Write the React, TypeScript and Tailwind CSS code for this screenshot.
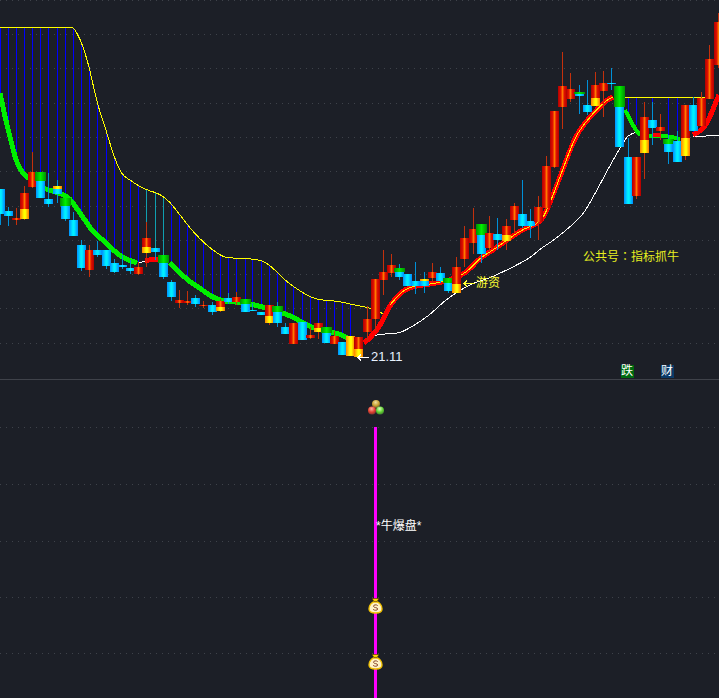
import React from "react";

type Kind = "r" | "y" | "c" | "g" | "o" | "t";
// x, wickTop, bodyTop, bodyBottom, wickBottom, kind, split
type C = [number, number, number, number, number, Kind, number?];

const candles: C[] = [
  [0, 189, 189, 214, 225, "c"],
  [8, 207, 211, 216, 226, "c"],
  [16, 208, 218, 220, 225, "r"],
  [24, 186, 193, 219, 220, "y", 209],
  [32, 152, 172, 187, 188, "r"],
  [40, 172, 172, 198, 198, "g", 181],
  [48, 173, 199, 204, 207, "c"],
  [57, 180, 186, 194, 203, "t", 189],
  [65, 198, 198, 219, 221, "g", 206],
  [73, 212, 220, 236, 236, "c"],
  [81, 240, 245, 268, 271, "c"],
  [89, 245, 250, 270, 277, "r"],
  [97, 241, 250, 255, 257, "c"],
  [106, 250, 250, 266, 269, "c"],
  [114, 259, 263, 272, 273, "c"],
  [122, 255, 265, 267, 269, "c"],
  [130, 260, 268, 271, 274, "c"],
  [138, 262, 267, 274, 275, "r"],
  [146, 222, 238, 253, 267, "y", 247],
  [155, 248, 248, 252, 260, "c"],
  [163, 255, 255, 277, 279, "g", 263],
  [171, 280, 282, 297, 301, "c"],
  [179, 290, 300, 303, 308, "r"],
  [187, 291, 301, 303, 305, "r"],
  [195, 295, 298, 304, 307, "c"],
  [203, 301, 305, 306, 308, "r"],
  [212, 302, 305, 312, 315, "c"],
  [220, 299, 301, 311, 312, "y", 307],
  [228, 293, 298, 302, 304, "c"],
  [236, 292, 297, 302, 305, "r"],
  [245, 299, 299, 312, 312, "g", 304],
  [252, 303, 310, 311, 311, "c"],
  [261, 312, 312, 315, 315, "c"],
  [269, 305, 305, 323, 325, "y", 316],
  [277, 302, 306, 323, 327, "g", 312],
  [285, 323, 327, 334, 334, "c"],
  [293, 323, 323, 344, 344, "r"],
  [302, 322, 322, 340, 340, "c"],
  [310, 327, 335, 338, 339, "r"],
  [318, 323, 323, 332, 339, "y", 328],
  [326, 327, 327, 343, 343, "g", 333],
  [334, 331, 336, 344, 344, "r"],
  [342, 342, 342, 355, 355, "c"],
  [350, 336, 336, 356, 356, "o"],
  [358, 337, 337, 357, 357, "y", 349],
  [367, 306, 319, 332, 341, "r"],
  [375, 279, 279, 319, 331, "r"],
  [383, 250, 272, 280, 295, "r"],
  [391, 254, 265, 273, 277, "r"],
  [399, 264, 268, 277, 280, "g", 272],
  [407, 274, 274, 286, 286, "c"],
  [415, 262, 281, 286, 294, "c"],
  [424, 272, 279, 286, 293, "t", 281],
  [432, 263, 272, 278, 283, "r"],
  [440, 267, 273, 281, 283, "c"],
  [448, 278, 278, 291, 293, "g", 283],
  [456, 257, 267, 293, 293, "y", 284],
  [464, 226, 238, 259, 267, "r"],
  [473, 208, 229, 243, 254, "r"],
  [481, 224, 224, 254, 263, "g", 235],
  [489, 216, 233, 248, 251, "r"],
  [497, 218, 234, 240, 250, "c"],
  [506, 219, 226, 241, 250, "y", 235],
  [514, 203, 206, 220, 233, "r"],
  [522, 180, 214, 226, 228, "c"],
  [530, 209, 221, 226, 238, "c"],
  [538, 196, 207, 222, 240, "r"],
  [546, 156, 166, 208, 209, "r"],
  [554, 111, 111, 167, 168, "r"],
  [562, 52, 86, 107, 129, "r"],
  [570, 73, 89, 99, 102, "r"],
  [579, 85, 92, 96, 114, "g", 94],
  [587, 80, 105, 112, 115, "c"],
  [595, 72, 85, 106, 106, "y", 98],
  [603, 71, 83, 91, 117, "r"],
  [611, 68, 83, 84, 90, "c"],
  [619, 86, 86, 147, 147, "g", 107],
  [628, 138, 157, 204, 204, "c"],
  [636, 157, 157, 196, 199, "r"],
  [644, 102, 117, 153, 179, "y", 140],
  [652, 102, 120, 128, 145, "c"],
  [660, 114, 127, 131, 140, "r"],
  [668, 135, 139, 152, 164, "g", 144],
  [677, 131, 141, 162, 162, "c"],
  [685, 105, 105, 156, 160, "y", 138],
  [693, 97, 105, 131, 131, "c"],
  [701, 92, 98, 126, 126, "r"],
  [709, 45, 59, 99, 99, "r"],
  [718, 13, 22, 65, 68, "r"],
];

// Smooth curve through the midpoints of the measured points, keeping both ends.
const smooth = (p: number[][]) => {
  if (p.length < 3) return `M${p.map((q) => q.join(" ")).join(" L")}`;
  let d = `M${p[0][0]} ${p[0][1]}`;
  for (let i = 1; i < p.length - 1; i++) {
    const mx = (p[i][0] + p[i + 1][0]) / 2;
    const my = (p[i][1] + p[i + 1][1]) / 2;
    d += ` Q${p[i][0]} ${p[i][1]} ${mx} ${my}`;
  }
  const e = p[p.length - 1];
  return `${d} L${e[0]} ${e[1]}`;
};

const interp = (p: number[][], x: number) => {
  for (let i = 1; i < p.length; i++) {
    if (x <= p[i][0]) {
      const [a, b] = p[i - 1];
      const [c, d] = p[i];
      return b + ((x - a) / (c - a)) * (d - b);
    }
  }
  return p[p.length - 1][1];
};

const band = [
  [0, 27], [70, 27], [74, 28], [80, 39], [83, 47], [89, 66], [97, 103], [106, 130], [114, 157], [122, 175],
  [130, 180], [140, 187], [150, 191], [160, 194], [170, 202], [180, 215], [190, 228], [200, 239], [210, 248],
  [220, 255], [227, 258], [257, 259], [267, 263], [277, 272], [287, 282], [297, 289], [310, 297], [320, 300],
  [337, 301], [350, 304], [370, 308], [380, 312], [385, 315],
];

const green1 = [
  [0, 93], [5, 117], [10, 137], [15, 157], [20, 170], [27, 177], [36, 184], [45, 189], [53, 191], [67, 196],
  [73, 203], [80, 213], [87, 223], [93, 232], [103, 240], [113, 250], [123, 258], [137, 263],
];
const red1 = [[145, 261], [150, 259.5], [158, 259]];
const green2 = [
  [170, 263], [180, 273], [190, 282], [200, 288], [210, 296], [220, 300], [230, 302], [240, 302], [250, 304],
  [263, 307], [283, 313], [293, 317], [308, 326], [320, 330], [340, 334], [347, 338],
];
const redMain = [
  [364, 343], [368, 340], [377, 330], [383, 320], [390, 305], [400, 293], [410, 287], [423, 285], [443, 282],
  [455, 278], [467, 272], [480, 258], [490, 252], [500, 245], [510, 238], [523, 229], [540, 223], [548, 208],
  [560, 177], [570, 150], [578, 132], [593, 113], [607, 100], [613, 97],
];
const green3 = [[625, 110], [630, 120], [637, 132], [641, 135]];
const green4 = [[648, 136], [652, 136], [668, 136], [680, 139]];
const red3 = [[652, 135.5], [660, 135]];
const red4 = [[693, 135], [703, 130], [710, 117], [715, 104], [719, 95]];
const white = [
  [363, 342], [373, 334], [397, 334], [410, 328], [430, 315], [443, 302], [457, 292], [473, 283], [490, 278],
  [513, 267], [530, 258], [540, 249], [557, 238], [580, 218], [587, 208], [597, 190], [613, 160], [623, 143],
  [628, 135], [637, 132],
];
const white2 = [[652, 137], [660, 137]];
const white3 = [[693, 137], [719, 135]];

const blueX = [0, 8, 16, 24, 32, 40, 48, 57, 65, 73, 81, 89, 97, 106, 114, 122, 130, 138, 171, 179, 187, 195, 203, 212, 220, 228, 236, 245, 252, 261, 269, 277, 285, 293, 302, 310, 318, 326, 334, 342, 350];
const tealX = [146, 155, 163];
const rightBlue = [
  [628, 112], [636, 125], [652, 136], [668, 136], [677, 138], [693, 134],
];

const fills: Record<string, string> = { r: "url(#gr)", y: "url(#gy)", c: "url(#gc)", g: "url(#gg)", o: "url(#gy)" };

function Curve({ p, color, w }: { p: number[][]; color: string; w: number }) {
  return <path d={smooth(p)} fill="none" stroke={color} strokeWidth={w} shapeRendering="crispEdges" />;
}

function Candle({ c }: { c: C }) {
  const [x, wt, bt, bb, wb, k, s] = c;
  const wick = k === "c" || k === "g" || k === "t" ? "#0090d8" : "#c4300c";
  const left = x - 4;
  return (
    <g shapeRendering="crispEdges">
      <line x1={x + 0.5} x2={x + 0.5} y1={wt} y2={wb} stroke={wick} strokeWidth={1} />
      {k === "r" && <rect x={left} y={bt} width={9} height={bb - bt} fill={fills.r} />}
      {k === "o" && <rect x={left} y={bt} width={9} height={bb - bt} fill={fills.o} />}
      {k === "c" && <rect x={left} y={bt} width={9} height={bb - bt} fill={fills.c} />}
      {k === "y" && (
        <>
          <rect x={left} y={bt} width={9} height={s! - bt} fill={fills.r} />
          <rect x={left} y={s} width={9} height={bb - s!} fill={fills.y} />
        </>
      )}
      {k === "g" && (
        <>
          <rect x={left} y={s} width={9} height={bb - s!} fill={fills.c} />
          <rect x={left - 1} y={bt} width={11} height={s! - bt} fill={fills.g} />
        </>
      )}
      {k === "t" && (
        <>
          <rect x={left} y={s} width={9} height={bb - s!} fill={fills.c} />
          <rect x={left} y={bt} width={9} height={s! - bt} fill={fills.y} />
        </>
      )}
    </g>
  );
}

function Grid({ ys }: { ys: number[] }) {
  return (
    <>
      {ys.map((y) => (
        <line key={y} x1={0} x2={719} y1={y + 0.5} y2={y + 0.5} stroke="#3e424a" strokeWidth={1} strokeDasharray="1 5" />
      ))}
    </>
  );
}

function Bag({ cy }: { cy: number }) {
  return (
    <g transform={`translate(375.5 ${cy})`}>
      <path d="M-6.5 3 C-6.5 -1 -3.5 -3.5 -2 -4 L2 -4 C3.5 -3.5 6.5 -1 6.5 3 C6.5 6 3.5 7 0 7 C-3.5 7 -6.5 6 -6.5 3 Z" fill="#fff2c8" stroke="#f0c000" strokeWidth={1.4} />
      <path d="M-3.5 -7.5 L3.5 -7.5 L1.6 -4.6 L-1.6 -4.6 Z" fill="#ffd400" stroke="#4a3300" strokeWidth={0.6} />
      <path d="M2.2 -0.4 C1 -1.6 -2.2 -1.4 -2 0.4 C-1.8 2 2.2 1.2 2.2 3 C2.2 4.6 -1.2 4.6 -2.4 3.4" fill="none" stroke="#8a4a30" strokeWidth={1} />
    </g>
  );
}

function Ball({ x, y, id }: { x: number; y: number; id: string }) {
  return <circle cx={x} cy={y} r={4} fill={`url(#${id})`} />;
}

function Arrow({ color }: { color: string }) {
  return (
    <svg width={13} height={9} viewBox="0 0 13 9" className="shrink-0">
      <path d="M12 4.5 H1 M4 1.5 L1 4.5 L4 7.5" fill="none" stroke={color} strokeWidth={1} shapeRendering="crispEdges" />
    </svg>
  );
}

const font = { fontFamily: '"Liberation Sans","Noto Sans CJK SC",sans-serif' };
const colonFont = { fontFamily: '"Noto Sans CJK TC",sans-serif' };

export default function App() {
  return (
    <div className="flex h-[698px] w-[719px] flex-col overflow-hidden bg-[#1c1f27]" style={font}>
      <div className="relative h-[380px] shrink-0 border-b border-[#3f424a]">
        <svg width={719} height={379} viewBox="0 0 719 379" className="block">
          <defs>
            <linearGradient id="gr" x1="0" x2="1" y1="0" y2="0">
              <stop offset="0" stopColor="#b00000" />
              <stop offset="0.3" stopColor="#e01000" />
              <stop offset="0.5" stopColor="#ff7800" />
              <stop offset="0.7" stopColor="#e01000" />
              <stop offset="1" stopColor="#b00000" />
            </linearGradient>
            <linearGradient id="gy" x1="0" x2="1" y1="0" y2="0">
              <stop offset="0" stopColor="#ff8000" />
              <stop offset="0.45" stopColor="#ffff00" />
              <stop offset="0.6" stopColor="#ffff00" />
              <stop offset="1" stopColor="#ff7000" />
            </linearGradient>
            <linearGradient id="gc" x1="0" x2="1" y1="0" y2="0">
              <stop offset="0" stopColor="#0090ff" />
              <stop offset="0.45" stopColor="#00f4ff" />
              <stop offset="0.6" stopColor="#00e8ff" />
              <stop offset="1" stopColor="#0088ff" />
            </linearGradient>
            <linearGradient id="gg" x1="0" x2="1" y1="0" y2="0">
              <stop offset="0" stopColor="#009000" />
              <stop offset="0.5" stopColor="#00f000" />
              <stop offset="1" stopColor="#009000" />
            </linearGradient>
          </defs>
          <Grid ys={[0, 34, 68, 103, 137, 171, 206, 240, 274, 308, 343]} />
          <g shapeRendering="crispEdges" strokeWidth={1}>
            {blueX.map((x) => (
              <line key={x} x1={x + 0.5} x2={x + 0.5} y1={interp(band, x)} y2={x < 140 ? interp(green1, x) : interp(green2, x)} stroke="#0000ff" />
            ))}
            {tealX.map((x) => (
              <line key={x} x1={x + 0.5} x2={x + 0.5} y1={interp(band, x)} y2={255} stroke="#10a0b0" />
            ))}
            {rightBlue.map(([x, y]) => (
              <line key={x} x1={x + 0.5} x2={x + 0.5} y1={97} y2={y} stroke="#0000ff" />
            ))}
          </g>
          <Curve p={band} color="#ffff00" w={1} />
          <line x1={624} x2={706} y1={97.5} y2={97.5} stroke="#ffff00" strokeWidth={1} shapeRendering="crispEdges" />
          <Curve p={white} color="#ffffff" w={1} />
          <Curve p={white2} color="#ffffff" w={1} />
          <Curve p={white3} color="#ffffff" w={1} />
          <line x1={139} x2={145} y1={262.5} y2={261.5} stroke="#ffffff" strokeWidth={1} shapeRendering="crispEdges" />
          <Curve p={green1} color="#00f000" w={5} />
          <Curve p={green2} color="#00f000" w={5} />
          <Curve p={green3} color="#00f000" w={4} />
          <Curve p={green4} color="#00f000" w={4} />
          <Curve p={red1} color="#ff0000" w={5} />
          <Curve p={red3} color="#ff0000" w={4} />
          <Curve p={red4} color="#ff0000" w={5} />
          <Curve p={redMain} color="#ff0000" w={5} />
          <Curve p={redMain.slice(4)} color="#ffee00" w={1} />
          {candles.map((c) => (
            <Candle key={c[0]} c={c} />
          ))}
        </svg>
        <span className="absolute left-[357px] top-[350px] flex items-center gap-px text-[13px] leading-[14px] text-[#e8f2ff]">
          <Arrow color="#ffffff" />21.11
        </span>
        <span className="absolute left-[463px] top-[276px] flex items-center text-[12px] leading-[14px] text-[#ffff33]">
          <Arrow color="#ffff33" />游资
        </span>
        <span className="absolute left-[583px] top-[249px] text-[12px] leading-[14px] text-[#e6ee20]">
          公共号<span style={colonFont}>：</span>指标抓牛
        </span>
        <span className="absolute left-[621px] top-[365px] h-[13px] w-[13px] bg-[#006a10] text-[12px] leading-[13px] text-white">跌</span>
        <span className="absolute left-[661px] top-[365px] h-[13px] w-[13px] bg-[#0a3a68] text-[12px] leading-[13px] text-white">财</span>
      </div>
      <div className="relative flex-1">
        <svg width={719} height={318} viewBox="0 380 719 318" className="block">
          <defs>
            <radialGradient id="by" cx="0.45" cy="0.3" r="0.7">
              <stop offset="0" stopColor="#f0e0a0" />
              <stop offset="0.6" stopColor="#c8a030" />
              <stop offset="1" stopColor="#6a5a30" />
            </radialGradient>
            <radialGradient id="br" cx="0.45" cy="0.3" r="0.7">
              <stop offset="0" stopColor="#ffb0a0" />
              <stop offset="0.6" stopColor="#e04030" />
              <stop offset="1" stopColor="#803030" />
            </radialGradient>
            <radialGradient id="bg" cx="0.45" cy="0.3" r="0.7">
              <stop offset="0" stopColor="#e0ffc0" />
              <stop offset="0.6" stopColor="#60d030" />
              <stop offset="1" stopColor="#408030" />
            </radialGradient>
          </defs>
          <Grid ys={[427, 484, 541, 597, 653]} />
          <rect x={374} y={427} width={3} height={271} fill="#ff00ff" shapeRendering="crispEdges" />
          <Ball x={376} y={404} id="by" />
          <Ball x={372} y={410.5} id="br" />
          <Ball x={380} y={410.5} id="bg" />
          <Bag cy={606} />
          <Bag cy={662} />
        </svg>
        <span className="absolute left-[376px] top-[139px] text-[12px] leading-[14px] text-white">*牛爆盘*</span>
      </div>
    </div>
  );
}
